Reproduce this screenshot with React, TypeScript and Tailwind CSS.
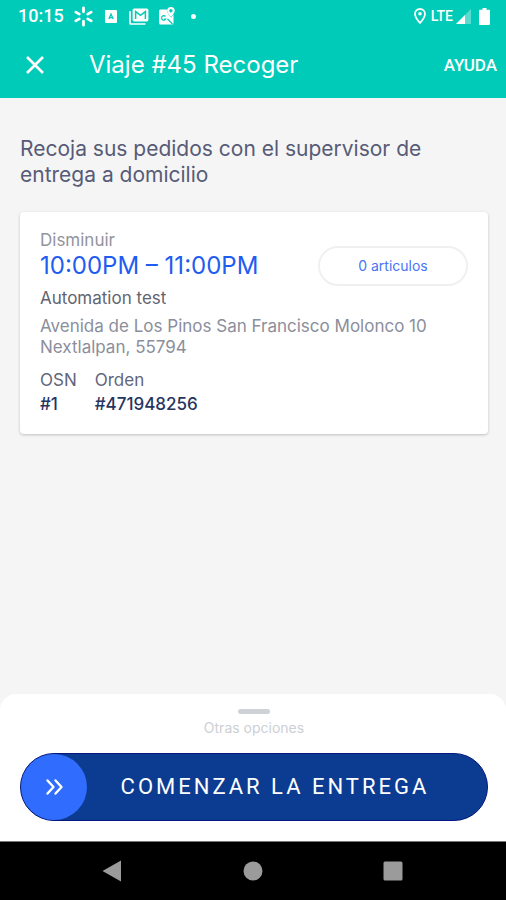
import type { ReactNode } from "react";

function StatusBar() {
  return (
    <div className="flex h-8 items-center justify-between pl-[18px] pr-4 font-['Roboto','Liberation_Sans',sans-serif] text-white">
      <div className="flex items-center">
        <span className="w-[55px] text-[18px] leading-5 font-medium">10:15</span>
        <svg className="size-[21px]" viewBox="0 0 21 21" fill="none" stroke="currentColor" strokeWidth="2.8" strokeLinecap="round" aria-hidden="true">
          <path d="M10.5 1.8v4M10.500 15.200v4M2.800 6.100l3.500 2M14.700 12.900l3.500 2M2.800 14.900l3.500-2M14.700 8.100l3.500-2" />
        </svg>
        <svg className="ml-[11px] h-[13px] w-3" viewBox="0 0 12 13" aria-hidden="true">
          <rect width="12" height="13" rx="1" fill="currentColor" />
          <path d="M3.8 9l2.2-5 2.2 5M4.6 7.6h2.8" fill="none" stroke="#00cbb8" strokeWidth="1.3" />
        </svg>
        <svg className="ml-3 h-[17px] w-5" viewBox="0 0 20 17" aria-hidden="true">
          <path d="M1 3.2V15a1 1 0 0 0 1 1h14.5" fill="none" stroke="currentColor" strokeWidth="1.7" />
          <rect x="3.6" y="0.4" width="15.8" height="13" rx="1.6" fill="currentColor" />
          <path d="M6.6 11V3.6l4.9 3.800 4.900-3.800V11" fill="none" stroke="#00cbb8" strokeWidth="1.5" />
        </svg>
        <svg className="ml-[10px] h-[18px] w-4" viewBox="0 0 16 18" aria-hidden="true">
          <path d="M1.5 2.500h6.300c0 3.500 2 5.200 4.200 8l2.500-3V16a1.500 1.500 0 0 1-1.500 1.500H1.500A1.500 1.500 0 0 1 0 16V4a1.500 1.500 0 0 1 1.500-1.500z" fill="currentColor" />
          <path d="M6.500 9.500a2.200 2.200 0 1 0 .2 2.500H5M8.500 12l5 5" fill="none" stroke="#00cbb8" strokeWidth="1.200" />
          <path d="M11.900 0a3.800 3.800 0 0 1 3.800 3.800c0 2.600-3.800 6.200-3.800 6.200s-3.800-3.600-3.800-6.200A3.800 3.800 0 0 1 11.900 0z" fill="currentColor" />
          <circle cx="11.900" cy="3.800" r="1.700" fill="#00cbb8" />
        </svg>
        <span className="ml-4 size-[5px] rounded-full bg-white" />
      </div>
      <div className="flex items-center">
        <svg className="h-4 w-3" viewBox="0 0 12 16" aria-hidden="true">
          <path d="M6 1a5 5 0 0 1 5 5c0 3.400-5 9-5 9S1 9.400 1 6a5 5 0 0 1 5-5z" fill="none" stroke="currentColor" strokeWidth="1.800" />
          <circle cx="6" cy="5.800" r="1.800" fill="currentColor" />
        </svg>
        <span className="ml-[5px] text-[14px] leading-5 font-medium">LTE</span>
        <svg className="ml-[3px] size-[15px]" viewBox="0 0 15 15" aria-hidden="true">
          <path d="M15 0v15H0z" fill="#fff" opacity="0.350" />
          <path d="M9 6v9H0z" fill="#fff" />
        </svg>
        <svg className="ml-2 h-[17px] w-[11px]" viewBox="0 0 11 17" aria-hidden="true">
          <path d="M3.500 0h4v1.800H10a1 1 0 0 1 1 1V16a1 1 0 0 1-1 1H1a1 1 0 0 1-1-1V2.800a1 1 0 0 1 1-1h2.500z" fill="#fff" />
        </svg>
      </div>
    </div>
  );
}

function NavButton({ label, children }: { label: string; children: ReactNode }) {
  return (
    <button type="button" aria-label={label} className="flex size-6 items-center justify-center">
      <svg className="size-6" viewBox="0 0 24 24" fill="#9b9b9b" aria-hidden="true">
        {children}
      </svg>
    </button>
  );
}

export default function App() {
  return (
    <div className="flex min-h-screen flex-col bg-[#f5f5f5] font-['Inter','Liberation_Sans',sans-serif]">
      <header className="bg-[#00cbb8] text-white">
        <StatusBar />
        <div className="flex h-[66px] items-center pr-[9px] pl-[25px]">
          <button type="button" aria-label="Cerrar" className="size-5">
            <svg className="size-5" viewBox="0 0 20 20" fill="none" stroke="currentColor" strokeWidth="2.600" aria-hidden="true">
              <path d="M2 2l16 16M18 2L2 18" />
            </svg>
          </button>
          <h1 className="ml-11 flex-1 text-[24px] leading-8 font-normal">Viaje #45 Recoger</h1>
          <button type="button" className="font-['Roboto','Liberation_Sans',sans-serif] text-[17px] leading-6 font-medium">AYUDA</button>
        </div>
      </header>

      <main className="flex-1 pt-[38px] pr-[18px] pb-6 pl-5">
        <h2 className="text-[21px] leading-[26px] text-[#575b77]">
          Recoja sus pedidos con el supervisor de entrega a domicilio
        </h2>
        <section className="mt-6 rounded bg-white px-5 pt-[18px] pb-[18px] shadow-[0_1px_3px_rgba(0,0,0,0.22)]">
          <div className="flex items-end justify-between">
            <div>
              <p className="text-[17px] leading-5 text-[#92949e]">Disminuir</p>
              <p className="text-[24px] leading-8 text-[#1f5cf0]">10:00PM – 11:00PM</p>
            </div>
            <button type="button" className="-mb-1 h-10 w-[150px] rounded-full border-2 border-[#f0f0f2] text-[14px] leading-5 text-[#4775f5]">
              0 articulos
            </button>
          </div>
          <p className="mt-1 text-[17px] leading-6 text-[#62656f]">Automation test</p>
          <p className="mt-[6px] text-[17px] leading-[21px] text-[#8b8e9c]">
            Avenida de Los Pinos San Francisco Molonco 10 Nextlalpan, 55794
          </p>
          <dl className="mt-[10px] flex gap-[18px] text-[17px] leading-6">
            <div>
              <dt className="text-[#62667a]">OSN</dt>
              <dd className="font-medium text-[#27345f]">#1</dd>
            </div>
            <div>
              <dt className="text-[#62667a]">Orden</dt>
              <dd className="font-medium text-[#27345f]">#471948256</dd>
            </div>
          </dl>
        </section>
      </main>

      <footer>
        <div className="rounded-t-2xl bg-white pt-[15px] pr-[18px] pb-5 pl-5">
          <button type="button" className="mx-auto flex flex-col items-center text-[14px] leading-5 text-[#cdd0d5]">
            <span className="mb-1 h-[5px] w-8 rounded-sm bg-[#ced1d6]" />
            Otras opciones
          </button>
          <button type="button" className="mt-[15px] flex h-[68px] w-full items-center rounded-full border border-[#06187f] bg-[#0b3c92] text-white">
            <span className="flex size-[66px] shrink-0 items-center justify-center rounded-full bg-[#306dfe]">
              <svg className="size-5" viewBox="0 0 20 20" fill="none" stroke="currentColor" strokeWidth="2.400" strokeLinecap="round" strokeLinejoin="round" aria-hidden="true">
                <path d="M3.500 3.500L9.500 10l-6 6.500M11.500 3.500l6 6.500-6 6.500" />
              </svg>
            </span>
            <span className="flex-1 pr-6 text-center font-['Roboto','Liberation_Sans',sans-serif] text-[22px] leading-8 tracking-[3px]">
              COMENZAR LA ENTREGA
            </span>
          </button>
        </div>
        <nav aria-label="Sistema" className="flex h-[59px] items-center justify-center gap-[116px] border-t border-[#777777] bg-black">
          <NavButton label="Atrás">
            <path d="M1.500 12L20 1.500v21z" />
          </NavButton>
          <NavButton label="Inicio">
            <circle cx="12" cy="12" r="9.500" />
          </NavButton>
          <NavButton label="Recientes">
            <rect x="2.500" y="2.500" width="19" height="19" rx="1.500" />
          </NavButton>
        </nav>
      </footer>
    </div>
  );
}
